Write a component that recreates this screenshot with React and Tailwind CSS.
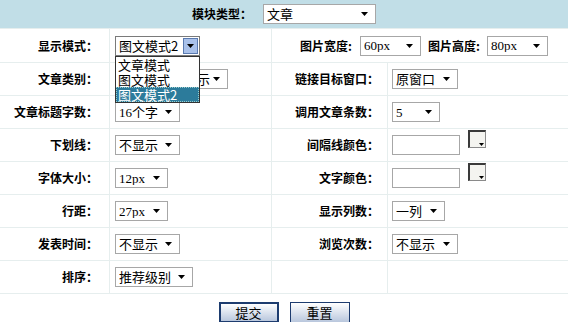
import React from "react";

const cjk = { fontFamily: '"Noto Sans CJK SC", "Liberation Sans", sans-serif' };
const mixed = { fontFamily: '"Liberation Serif", "Noto Sans CJK SC", serif' };

function Tri() {
  return (
    <svg width="7" height="4" viewBox="0 0 7 4" className="shrink-0">
      <path d="M0 0h7L3.5 4z" fill="#000" />
    </svg>
  );
}

function Sel({ text, className = "" }) {
  return (
    <div
      className={`flex h-[20px] items-center justify-between border border-[#a7a7a7] bg-white pl-[3px] pr-[7px] text-[13px] leading-none text-black ${className}`}
      style={mixed}
    >
      <span className="truncate whitespace-nowrap">{text}</span>
      <Tri />
    </div>
  );
}

function ColorBox() {
  return (
    <div className="mb-[13px] flex h-[18px] w-[18px] shrink-0 items-end justify-end border border-l-2 border-t-2 border-t-[#3a3a3a] border-l-[#3a3a3a] border-r-[#8a8a8a] border-b-[#8a8a8a] bg-[#f4f4f0] pb-[1px] pr-[1px]">
      <svg width="5" height="3" viewBox="0 0 5 3">
        <path d="M0 0h5L2.5 3z" fill="#000" />
      </svg>
    </div>
  );
}

function Label({ children, className = "" }) {
  return (
    <div
      className={`flex items-center justify-end whitespace-nowrap text-[12px] font-bold text-black ${className}`}
      style={cjk}
    >
      {children}
    </div>
  );
}

function Row({ label, left, label2, right }) {
  return (
    <div className="flex h-[33px] border-b border-[#e6eeee]">
      <Label className="w-[110px] border-r border-[#e6eeee] pr-[11px]">{label}</Label>
      <div className="flex w-[162px] items-center border-r border-[#e6eeee] pl-[5px]">{left}</div>
      <Label className="w-[116px] border-r border-[#e6eeee] pr-[8px]">{label2}</Label>
      <div className="flex flex-1 items-center gap-[8px] pl-[4px]">{right}</div>
    </div>
  );
}

export default function App() {
  return (
    <div className="h-[322px] w-[568px] overflow-hidden bg-white">
      <div className="flex h-[29px] items-center gap-[11px] border-b border-[#e6eeee] bg-[#c1dee7] pl-[192px]">
        <Label>模块类型：</Label>
        <Sel text="文章" className="w-[113px]" />
      </div>

      <div className="flex h-[34px] border-b border-[#e6eeee]">
        <Label className="w-[110px] border-r border-[#e6eeee] pr-[11px]">显示模式：</Label>
        <div className="flex w-[162px] items-center border-r border-[#e6eeee] pl-[5px]">
          <div className="relative z-10">
            <div
              className="flex h-[20px] w-[85px] items-center justify-between border border-[#7a7a7a] bg-white pl-[3px] pr-[1px] text-[13px] leading-none"
              style={cjk}
            >
              <span className="whitespace-nowrap">图文模式2</span>
              <div className="flex h-[16px] w-[15px] items-center justify-center border border-[#5a7ab0] bg-[#a9c1ea]">
                <Tri />
              </div>
            </div>
            <div
              className="absolute left-0 top-full w-[85px] border border-[#333] bg-white text-[13px] leading-[15px]"
              style={cjk}
            >
              <div className="px-[2px]">文章模式</div>
              <div className="px-[2px]">图文模式</div>
              <div className="border border-dotted border-[#9cc] bg-[#2c7b9b] px-[1px] leading-[13px] text-white">
                图文模式2
              </div>
            </div>
          </div>
        </div>
        <div className="flex flex-1 items-center pl-[28px]">
          <Label className="w-[58px] justify-start">图片宽度:</Label>
          <Sel text="60px" className="ml-[2px] w-[61px]" />
          <Label className="ml-[7px] w-[58px] justify-start">图片高度:</Label>
          <Sel text="80px" className="ml-[1px] w-[61px]" />
        </div>
      </div>

      <Row
        label="文章类别："
        left={<Sel text="所有类别全显示" className="w-[113px]" />}
        label2="链接目标窗口："
        right={<Sel text="原窗口" className="w-[66px]" />}
      />
      <Row
        label="文章标题字数："
        left={<Sel text="16个字" className="w-[65px]" />}
        label2="调用文章条数："
        right={<Sel text="5" className="w-[48px]" />}
      />
      <Row
        label="下划线："
        left={<Sel text="不显示" className="w-[65px]" />}
        label2="间隔线颜色："
        right={
          <>
            <div className="h-[20px] w-[68px] border border-[#a7a7a7] bg-white" />
            <ColorBox />
          </>
        }
      />
      <Row
        label="字体大小："
        left={<Sel text="12px" className="w-[53px]" />}
        label2="文字颜色："
        right={
          <>
            <div className="h-[20px] w-[68px] border border-[#a7a7a7] bg-white" />
            <ColorBox />
          </>
        }
      />
      <Row
        label="行距："
        left={<Sel text="27px" className="w-[53px]" />}
        label2="显示列数："
        right={<Sel text="一列" className="w-[53px]" />}
      />
      <Row
        label="发表时间："
        left={<Sel text="不显示" className="w-[65px]" />}
        label2="浏览次数："
        right={<Sel text="不显示" className="w-[66px]" />}
      />
      <Row label="排序：" left={<Sel text="推荐级别" className="w-[78px]" />} label2="" right={null} />

      <div className="flex justify-center gap-[11px] pt-[8px]">
        <button
          className="h-[21px] w-[60px] border-2 border-[#1d3c6f] bg-gradient-to-b from-white to-[#b9c7dd] text-[13px] leading-none text-black"
          style={cjk}
        >
          提交
        </button>
        <button
          className="h-[21px] w-[60px] border border-[#1d3c6f] bg-gradient-to-b from-white to-[#b9c7dd] text-[13px] leading-none text-black"
          style={cjk}
        >
          重置
        </button>
      </div>
    </div>
  );
}
